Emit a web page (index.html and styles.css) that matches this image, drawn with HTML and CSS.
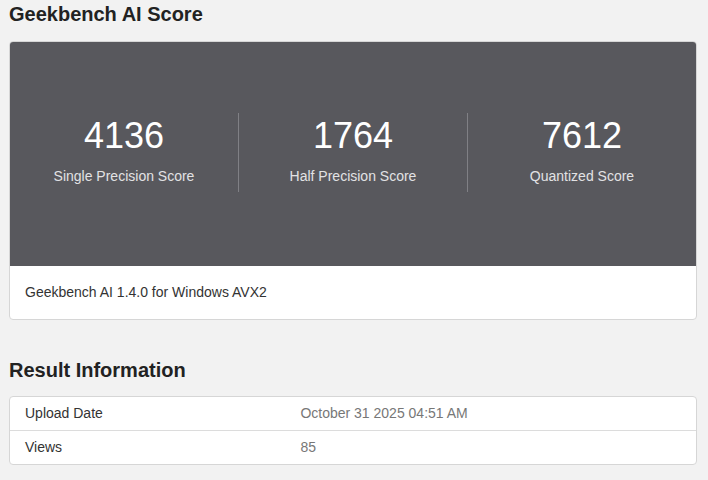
FILE: index.html
```html
<!DOCTYPE html>
<html>
<head>
    <title>Geekbench AI Score</title>
    <link rel="stylesheet" href="styles.css">
</head>
<body>
    <div class="page">
        <h2 class="section-title">Geekbench AI Score</h2>
        <div class="score-card">
            <div class="score-panel">
                <div class="score-col">
                    <div class="score-value">4136</div>
                    <div class="score-label">Single Precision Score</div>
                </div>
                <div class="score-col">
                    <div class="score-value">1764</div>
                    <div class="score-label">Half Precision Score</div>
                </div>
                <div class="score-col">
                    <div class="score-value">7612</div>
                    <div class="score-label">Quantized Score</div>
                </div>
            </div>
            <div class="score-footer">Geekbench AI 1.4.0 for Windows AVX2</div>
        </div>

        <h2 class="section-title result-title">Result Information</h2>
        <div class="info-table">
            <div class="info-row">
                <div class="info-name">Upload Date</div>
                <div class="info-value">October 31 2025 04:51 AM</div>
            </div>
            <div class="info-row">
                <div class="info-name">Views</div>
                <div class="info-value">85</div>
            </div>
        </div>
    </div>
</body>
</html>
```

FILE: styles.css
```css
body {
    margin: 0;
    background: #f2f2f2;
    font-family: "Liberation Sans", Arial, sans-serif;
    color: #333;
}

.page {
    width: 688px;
    margin-left: 9px;
    padding-top: 2px;
}

.section-title {
    margin: 0;
    font-size: 20px;
    line-height: 24px;
    font-weight: bold;
    color: #222;
}

.result-title {
    margin-top: 38px;
}

.score-card {
    margin-top: 15px;
    border: 1px solid #d6d6d6;
    border-radius: 4px;
    overflow: hidden;
    background: #fff;
}

.score-panel {
    display: flex;
    background: #58585d;
    height: 224px;
    padding-top: 71px;
    box-sizing: border-box;
}

.score-col {
    flex: 1;
    height: 79px;
    padding-top: 3px;
    box-sizing: border-box;
    text-align: center;
}

.score-col + .score-col {
    border-left: 1px solid #808085;
}

.score-value {
    font-size: 36px;
    line-height: 40px;
    color: #fff;
}

.score-label {
    margin-top: 11px;
    font-size: 14px;
    line-height: 18px;
    color: #e2e2e4;
}

.score-footer {
    height: 53px;
    line-height: 53px;
    padding: 0 15px;
    font-size: 14px;
    color: #333;
}

.info-table {
    margin-top: 14px;
    border: 1px solid #d6d6d6;
    border-radius: 4px;
    background: #fff;
}

.info-row {
    display: grid;
    grid-template-columns: 40% 1fr;
    height: 33px;
    line-height: 33px;
    font-size: 14px;
}

.info-row + .info-row {
    border-top: 1px solid #dcdcdc;
}

.info-name {
    padding-left: 15px;
    color: #333;
}

.info-value {
    padding-left: 16px;
    color: #777;
}
```
